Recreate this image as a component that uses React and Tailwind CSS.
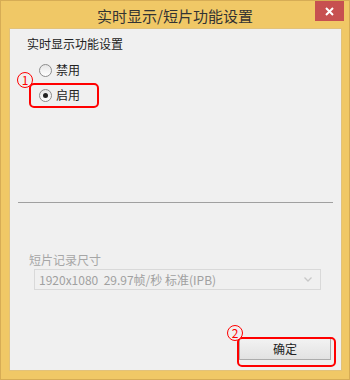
import React from "react";

const font = { fontFamily: '"Noto Sans CJK SC", "Noto Sans", sans-serif' };

function Radio({ checked, label }) {
  return (
    <div className="flex items-center h-[20px]">
      <div className="w-[13px] h-[13px] rounded-full border border-[#8c8c8c] bg-gradient-to-b from-[#e6e6e6] to-white flex items-center justify-center">
        {checked && <div className="w-[5px] h-[5px] rounded-full bg-[#222]" />}
      </div>
      <span className="ml-[4px] text-[12px] text-[#222] leading-none">{label}</span>
    </div>
  );
}

export default function App() {
  return (
    <div style={font} className="w-[350px] h-[380px] bg-[#f0c866] border border-[#d6ac55] relative overflow-hidden">
      <div className="h-[27px] flex items-center justify-center">
        <span className="text-[15px] text-[#333] leading-none mt-[1px]">实时显示/短片功能设置</span>
      </div>
      <div className="absolute top-0 right-[5px] w-[29px] h-[20px] bg-[#c75050] flex items-center justify-center">
        <svg width="9" height="9" viewBox="0 0 9 9">
          <path d="M1 1 L8 8 M8 1 L1 8" stroke="white" strokeWidth="2" />
        </svg>
      </div>
      <div className="ml-[8px] w-[333px] h-[343px] bg-[#f0f0f0] border border-[#e2c27a] relative">
        <div className="pl-[17px] pt-[8px] text-[12px] text-[#222] leading-[14px]">实时显示功能设置</div>
        <div className="pl-[29px] pt-[9px] flex flex-col gap-[5px]">
          <Radio label="禁用" />
          <Radio checked label="启用" />
        </div>
        <div className="mx-[8px] mt-[97px] h-[1px] bg-[#a0a0a0]" />
        <div className="pl-[19px] mt-[50px] text-[12px] text-[#a6a6a6] leading-[14px]">短片记录尺寸</div>
        <div className="ml-[24px] mt-[2px] w-[287px] h-[21px] border border-[#d9d9d9] bg-[#f0f0f0] flex items-center justify-between pl-[4px] pr-[8px]">
          <span className="text-[12px] text-[#a0a0a0] leading-none">1920x1080&nbsp;&nbsp;29.97帧/秒 标准(IPB)</span>
          <svg width="8" height="5" viewBox="0 0 8 5">
            <path d="M0.5 0.5 L4 4 L7.5 0.5" stroke="#c8c8c8" strokeWidth="1.3" fill="none" />
          </svg>
        </div>
        <div className="flex justify-end pr-[10px] mt-[48px]">
          <div className="w-[92px] h-[22px] border border-[#acacac] bg-gradient-to-b from-[#f2f2f2] to-[#e2e2e2] flex items-center justify-center text-[12px] text-[#222]">
            确定
          </div>
        </div>

        <div className="absolute left-[19px] top-[54px] w-[70px] h-[25px] rounded-[5px] border-2 border-[#ff0000]" />
        <div className="absolute left-[7px] top-[43px] w-[16px] h-[16px] rounded-full border border-[#ff0000] bg-[#f0f0f0] flex items-center justify-center text-[12px] text-[#ff0000] leading-none">1</div>

        <div className="absolute left-[227px] top-[308px] w-[99px] h-[30px] rounded-[5px] border-2 border-[#ff0000]" />
        <div className="absolute left-[217px] top-[296px] w-[16px] h-[16px] rounded-full border border-[#ff0000] bg-[#f0f0f0] flex items-center justify-center text-[12px] text-[#ff0000] leading-none">2</div>
      </div>
    </div>
  );
}
